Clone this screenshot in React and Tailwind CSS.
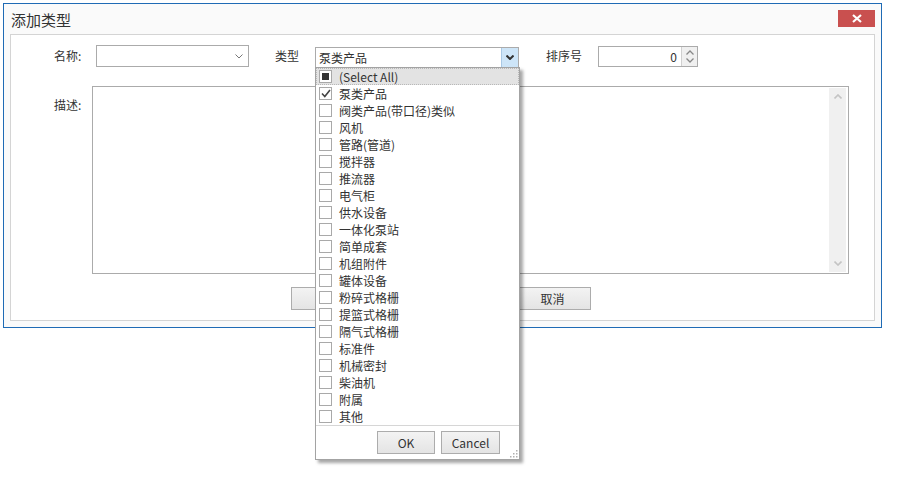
import React from 'react';

const items = [
  '泵类产品',
  '阀类产品(带口径)类似',
  '风机',
  '管路(管道)',
  '搅拌器',
  '推流器',
  '电气柜',
  '供水设备',
  '一体化泵站',
  '简单成套',
  '机组附件',
  '罐体设备',
  '粉碎式格栅',
  '提篮式格栅',
  '隔气式格栅',
  '标准件',
  '机械密封',
  '柴油机',
  '附属',
  '其他',
];

function Chevron({ className = '', up = false, strokeWidth = 1.2 }) {
  return (
    <svg width="8" height="5" viewBox="0 0 8 5" className={className}>
      <polyline
        points={up ? '0.5,4.5 4,1 7.5,4.5' : '0.5,0.5 4,4 7.5,0.5'}
        fill="none"
        stroke="currentColor"
        strokeWidth={strokeWidth}
      />
    </svg>
  );
}

function Check({ state }) {
  return (
    <span className="w-[13px] h-[13px] border border-[#a9a9a9] bg-white flex items-center justify-center shrink-0">
      {state === 'some' && <span className="w-[7px] h-[7px] bg-[#333]" />}
      {state === 'on' && (
        <svg width="10" height="9" viewBox="0 0 10 9">
          <polyline points="1,4.5 3.8,7.5 9,1" fill="none" stroke="#444" strokeWidth="1.6" />
        </svg>
      )}
    </span>
  );
}

function Btn({ children, className = '' }) {
  return (
    <button
      className={`h-[23px] border border-[#acacac] bg-gradient-to-b from-[#f3f3f3] to-[#e4e4e4] text-[12px] text-[#333] flex items-center justify-center ${className}`}
    >
      {children}
    </button>
  );
}

function TypePopup() {
  return (
    <div className="absolute left-[315px] top-[67px] w-[205px] h-[393px] border border-[#a3a3a3] bg-white shadow-[3px_3px_3px_rgba(0,0,0,0.35)] flex flex-col">
      <ul className="flex flex-col">
        <li className="h-[17px] flex items-center gap-[7px] pl-[2px] bg-[#e3e3e3] border border-dotted border-[#b8b8b8]">
          <Check state="some" />
          <span className="text-[12px] leading-[16px] text-[#333]">(Select All)</span>
        </li>
        {items.map((it, i) => (
          <li key={it} className="h-[17px] flex items-center gap-[7px] pl-[3px]">
            <Check state={i === 0 ? 'on' : 'off'} />
            <span className="text-[12px] leading-[16px] text-[#333]">{it}</span>
          </li>
        ))}
      </ul>
      <div className="mt-auto h-[34px] border-t border-[#d6d6d6] relative flex justify-end items-start gap-[6px] pt-[5px] pr-[19px]">
        <Btn className="w-[58px]">OK</Btn>
        <Btn className="w-[59px]">Cancel</Btn>
        <svg width="8" height="8" viewBox="0 0 8 8" className="absolute right-[1px] bottom-[1px]">
          <g fill="#b0b0b0">
            <rect x="6" y="0" width="1.5" height="1.5" />
            <rect x="3" y="3" width="1.5" height="1.5" />
            <rect x="6" y="3" width="1.5" height="1.5" />
            <rect x="0" y="6" width="1.5" height="1.5" />
            <rect x="3" y="6" width="1.5" height="1.5" />
            <rect x="6" y="6" width="1.5" height="1.5" />
          </g>
        </svg>
      </div>
    </div>
  );
}

export default function App() {
  return (
    <div className="relative w-[919px] h-[489px] bg-white text-[#333] font-['Noto_Sans_CJK_SC','Microsoft_YaHei',sans-serif] overflow-hidden">
      <div className="ml-[3px] pt-[3px]">
        <div className="w-[879px] h-[325px] border border-[#1f6bb5] bg-[#fafafa] flex flex-col">
          <div className="h-[30px] shrink-0 flex items-center justify-between pl-[7px] pr-[6px]">
            <span className="text-[15px] leading-none">添加类型</span>
            <button className="w-[37px] h-[17px] bg-[#c9504f] flex items-center justify-center mb-[1px]">
              <svg width="10" height="9" viewBox="0 0 10 9">
                <path d="M1 1 L9 8 M9 1 L1 8" stroke="white" strokeWidth="2.2" />
              </svg>
            </button>
          </div>

          <div className="mx-[6px] mb-[6px] flex-1 border border-[#d4d4d4] bg-white pt-[10px] pl-[43px]">
            <div className="flex items-center h-[22px] text-[12px]">
              <span className="w-[42px]">名称:</span>
              <div className="w-[153px] h-[22px] border border-[#ababab] flex items-center justify-end pr-[5px] text-[#777]">
                <Chevron strokeWidth={1} />
              </div>
              <span className="ml-[26px] w-[40px]">类型</span>
              <div className="w-[204px] h-[21px] mt-[2px] border border-[#ababab] flex items-stretch">
                <span className="flex-1 pl-[3px] leading-[19px]">泵类产品</span>
                <span className="w-[17px] bg-[#cde5f8] border-l border-[#a9c9e6] flex items-center justify-center text-[#333]">
                  <Chevron strokeWidth={2} />
                </span>
              </div>
              <span className="ml-[27px] w-[52px]">排序号</span>
              <div className="w-[100px] h-[21px] border border-[#ababab] flex items-stretch">
                <span className="flex-1 text-right pr-[4px] leading-[19px]">0</span>
                <span className="w-[16px] bg-[#f0f0f0] border-l border-[#d0d0d0] flex flex-col items-center justify-center gap-[3px] text-[#888]">
                  <Chevron up strokeWidth={1.3} />
                  <Chevron strokeWidth={1.3} />
                </span>
              </div>
            </div>

            <div className="flex mt-[19px] text-[12px]">
              <span className="w-[38px] mt-[10px]">描述:</span>
              <div className="w-[757px] h-[188px] border border-[#ababab] flex justify-end p-[1px] pr-[2px]">
                <div className="w-[17px] h-full bg-[#f0f0f0] flex flex-col items-center justify-between py-[6px] text-[#c4c4c4]">
                  <Chevron up strokeWidth={1.6} />
                  <Chevron strokeWidth={1.6} />
                </div>
              </div>
            </div>

            <div className="flex mt-[13px] ml-[237px] gap-[146px]">
              <Btn className="w-[77px]">确定</Btn>
              <Btn className="w-[77px]">取消</Btn>
            </div>
          </div>
        </div>
      </div>
      <TypePopup />
    </div>
  );
}
